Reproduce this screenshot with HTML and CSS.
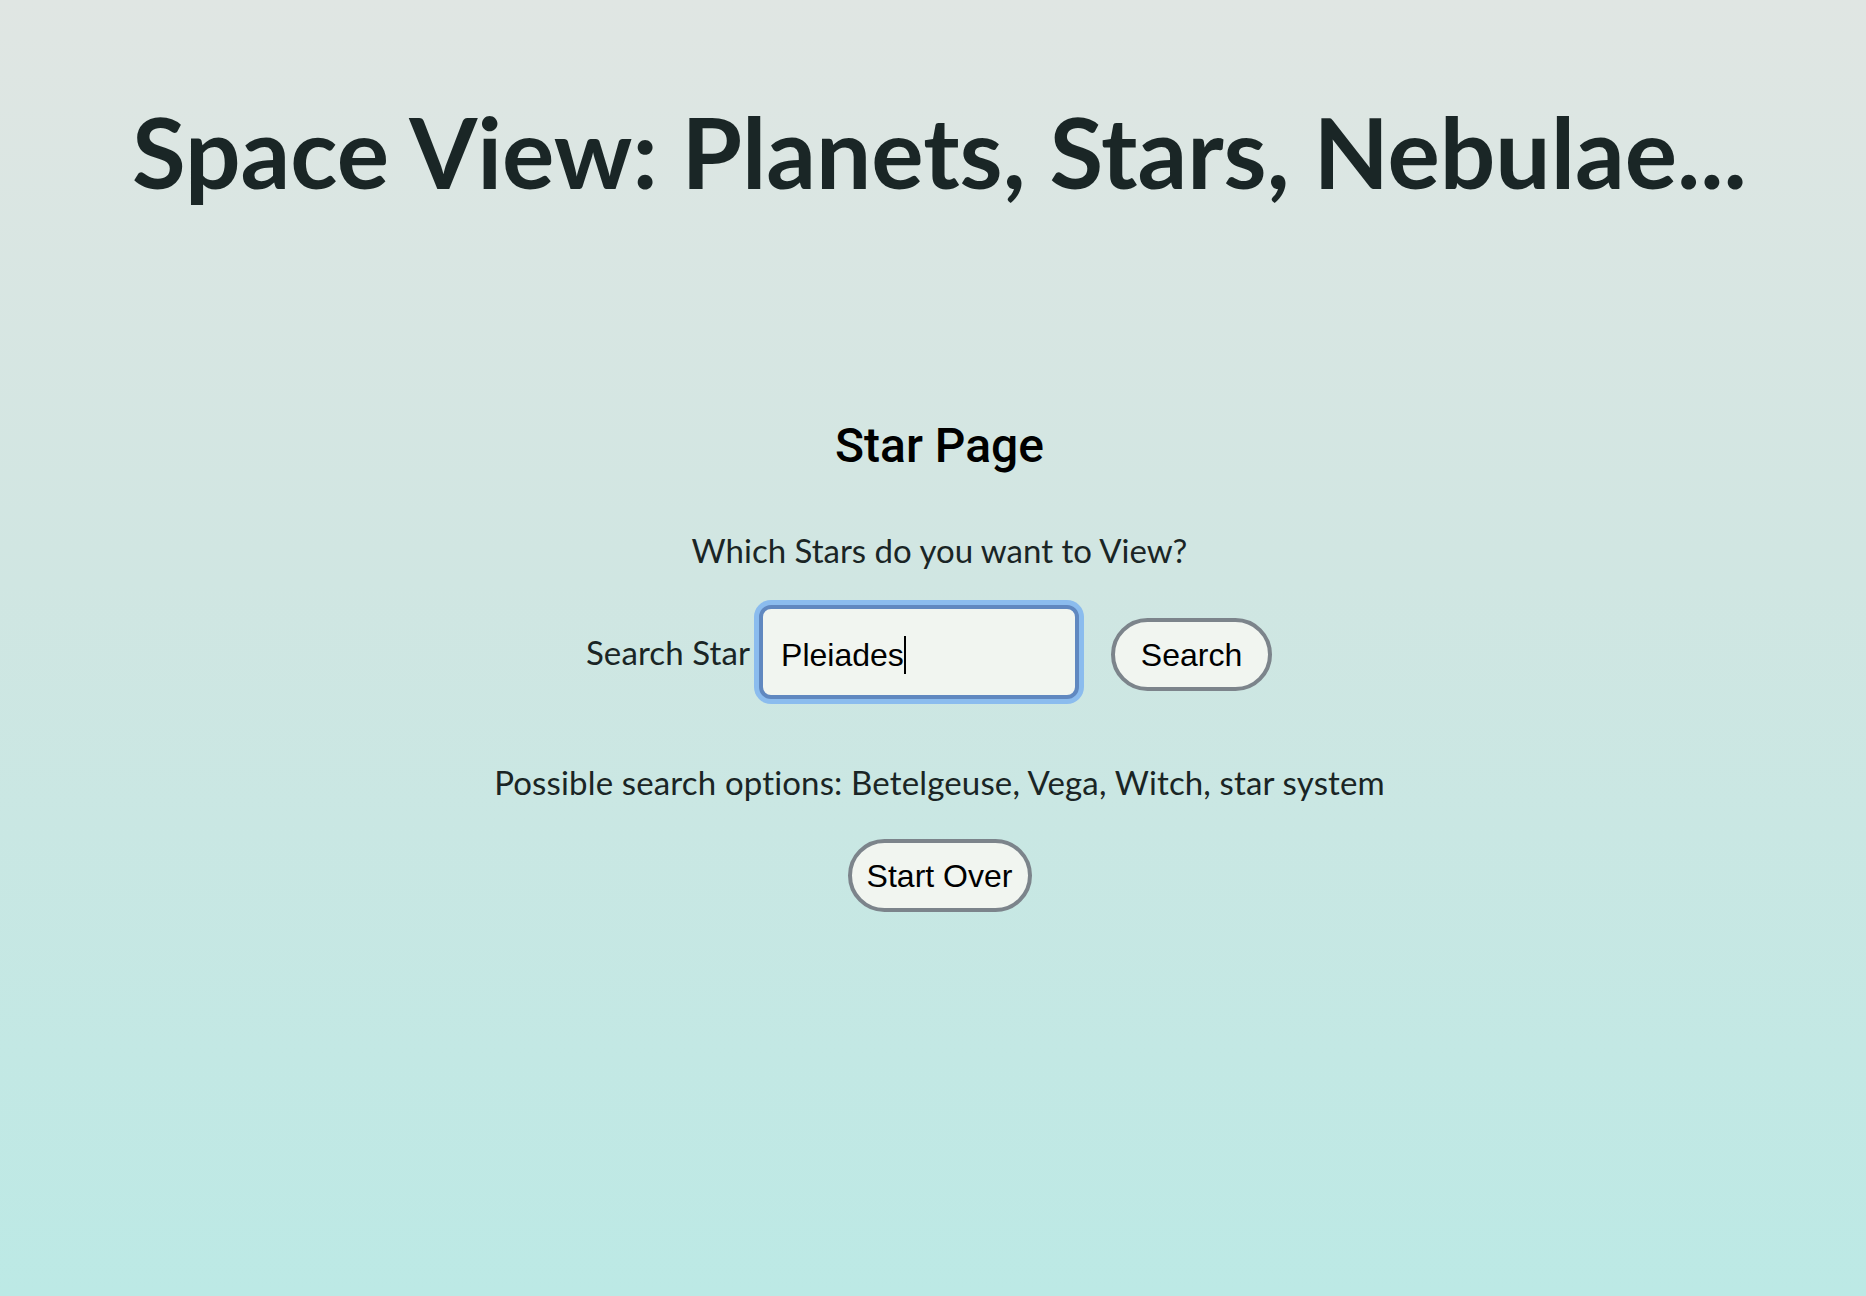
FILE: index.html
```html
<!DOCTYPE html>
<html lang="en">
<head>
<meta charset="utf-8">
<title>Space View</title>
<link rel="stylesheet" href="styles.css">
</head>
<body>
<main class="page">
  <h1 class="title">Space View: Planets, Stars, Nebulae...</h1>
  <h2 class="subtitle">Star Page</h2>
  <p class="question">Which Stars do you want to View?</p>
  <form class="search-row">
    <label class="search-label" for="star">Search Star</label>
    <span class="input-wrap">
      <input class="search-input" id="star" type="text" value="Pleiades">
      <span class="caret"></span>
    </span>
    <button class="btn btn-search" type="button">Search</button>
  </form>
  <p class="options">Possible search options: Betelgeuse, Vega, Witch, star system</p>
  <button class="btn btn-reset" type="button">Start Over</button>
</main>
</body>
</html>
```
FILE: styles.css
```css
html, body {
  margin: 0;
  padding: 0;
}

body {
  min-height: 1296px;
  background: linear-gradient(180deg, #e0e6e3 0%, #d0e6e2 45%, #bce9e5 100%);
  font-family: Lato, "Open Sans", sans-serif;
  color: #1a2525;
}

.page {
  display: flex;
  flex-direction: column;
  align-items: center;
  padding-left: 13px;
}

.title {
  margin: 92px 0 0;
  font-family: Lato, sans-serif;
  font-weight: 700;
  font-size: 98px;
  line-height: 119px;
  color: #1a2626;
  white-space: nowrap;
}

.subtitle {
  margin: 207px 0 0;
  font-family: Roboto, "Liberation Sans", sans-serif;
  font-weight: 500;
  font-size: 48px;
  line-height: 56px;
  color: #000;
}

.question {
  margin: 57px 0 0;
  font-size: 33px;
  line-height: 38px;
}

.search-row {
  display: flex;
  align-items: center;
  margin: 36px 0 0;
  padding-right: 21px;
}

.search-label {
  font-size: 33px;
  letter-spacing: 0.1px;
  line-height: 38px;
  margin-right: 9px;
}

.input-wrap {
  position: relative;
  display: block;
}

.search-input {
  display: block;
  box-sizing: border-box;
  width: 320px;
  height: 94px;
  padding: 6px 18px 0;
  border: 4px solid #6088c0;
  border-radius: 12px;
  background: #f1f5f0;
  box-shadow: 0 0 0 5px #8bbcee;
  font-family: "Liberation Sans", Arial, sans-serif;
  font-size: 32px;
  color: #000;
  outline: none;
  caret-color: transparent;
}

.caret {
  position: absolute;
  left: 145px;
  top: 31px;
  width: 2px;
  height: 38px;
  background: #000;
}

.btn {
  box-sizing: border-box;
  height: 73px;
  border: 4px solid #7c848b;
  border-radius: 37px;
  background: #f1f5f0;
  font-family: "Liberation Sans", Arial, sans-serif;
  font-size: 32px;
  color: #000;
  line-height: 1;
}

.btn-search {
  margin-left: 32px;
  margin-top: 5px;
  width: 161px;
  padding: 0;
}

.options {
  margin: 64px 0 0;
  font-size: 33px;
  letter-spacing: 0.15px;
  line-height: 38px;
}

.btn-reset {
  margin-top: 38px;
  width: 184px;
  padding: 0;
}
```
